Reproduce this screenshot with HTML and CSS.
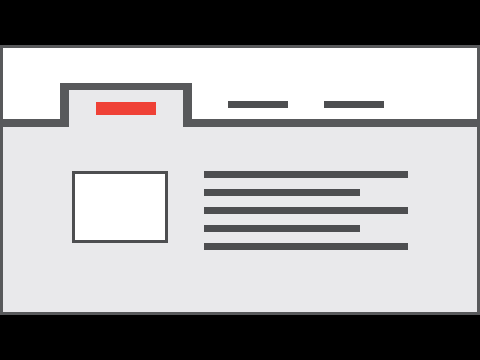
FILE: index.html
```html
<!DOCTYPE html>
<html>
<head>
<meta charset="utf-8">
<link rel="stylesheet" href="styles.css">
</head>
<body>
<div class="frame">
  <div class="header">
    <div class="spacer"></div>
    <div class="tab"><div class="tab-mark"></div></div>
    <div class="nav">
      <div class="nav-bar"></div>
      <div class="nav-bar"></div>
    </div>
  </div>
  <div class="content">
    <div class="thumb"></div>
    <div class="lines">
      <div class="line long"></div>
      <div class="line short"></div>
      <div class="line long"></div>
      <div class="line short"></div>
      <div class="line long"></div>
    </div>
  </div>
</div>
</body>
</html>
```
FILE: styles.css
```css
html, body {
  margin: 0;
  padding: 0;
  background: #000;
  width: 480px;
  height: 360px;
  overflow: hidden;
}
.frame {
  margin-top: 45px;
  width: 480px;
  height: 270px;
  box-sizing: border-box;
  border: 3px solid #58595b;
  display: flex;
  flex-direction: column;
  background: #e9e9eb;
}
.header {
  display: flex;
  height: 79px;
  background: #fff;
}
.spacer {
  width: 57px;
  border-bottom: 8px solid #58595b;
}
.tab {
  width: 132px;
  box-sizing: border-box;
  margin-top: 35px;
  border: 9px solid #58595b;
  border-top-width: 7px;
  border-bottom: 0;
  background: #e9e9eb;
  display: flex;
  justify-content: center;
  align-items: flex-start;
}
.tab-mark {
  width: 60px;
  height: 13px;
  margin-top: 12px;
  background: #ef4136;
}
.nav {
  flex: 1;
  border-bottom: 8px solid #58595b;
  display: flex;
  align-items: flex-start;
  gap: 36px;
  padding: 53px 0 0 36px;
}
.nav-bar {
  width: 60px;
  height: 7px;
  background: #4d4e50;
}
.content {
  flex: 1;
  display: flex;
  align-items: flex-start;
  padding: 44px 0 0 69px;
  gap: 36px;
}
.thumb {
  width: 96px;
  height: 72px;
  box-sizing: border-box;
  border: 3px solid #4d4e50;
  background: #fff;
}
.lines {
  display: flex;
  flex-direction: column;
  gap: 11px;
}
.line {
  height: 7px;
  background: #4d4e50;
}
.long { width: 204px; }
.short { width: 156px; }
```
